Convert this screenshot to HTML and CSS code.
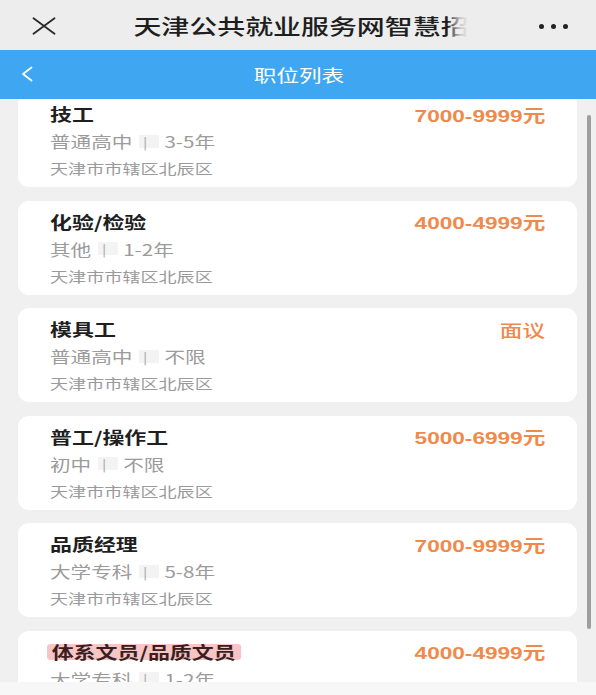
FILE: index.html
```html
<!DOCTYPE html>
<html lang="zh-CN">
<head>
<meta charset="utf-8">
<title>职位列表</title>
<link rel="stylesheet" href="styles.css">
</head>
<body>
<div class="app">
  <header class="topbar">
    <svg class="close-icon" width="24" height="18" viewBox="0 0 24 18" aria-hidden="true">
      <path d="M1.5 1.2 L22.5 16.8 M22.5 1.2 L1.5 16.8" stroke="#2a2a2a" stroke-width="1.8" fill="none" stroke-linecap="round"/>
    </svg>
    <div class="topbar-title"><span class="topbar-text">天津公共就业服务网智慧招</span></div>
    <div class="more"><span class="dot"></span><span class="dot"></span><span class="dot"></span></div>
  </header>
  <nav class="navbar">
    <svg class="back-icon" width="12" height="16" viewBox="0 0 12 16" aria-hidden="true">
      <path d="M10.5 1.5 L2 8 L10.5 14.5" stroke="#ffffff" stroke-width="1.8" fill="none" stroke-linejoin="round" stroke-linecap="round"/>
    </svg>
    <div class="navbar-title"><span class="navbar-text">职位列表</span></div>
  </nav>
  <main class="list">
    <div class="cards">
      <div class="card">
        <div class="row"><span class="job">技工</span><span class="pay">7000-9999元</span></div>
        <div class="meta"><span>普通高中</span><span class="sep">|</span><span>3-5年</span></div>
        <div class="addr">天津市市辖区北辰区</div>
      </div>
      <div class="card">
        <div class="row"><span class="job">化验/检验</span><span class="pay">4000-4999元</span></div>
        <div class="meta"><span>其他</span><span class="sep">|</span><span>1-2年</span></div>
        <div class="addr">天津市市辖区北辰区</div>
      </div>
      <div class="card">
        <div class="row"><span class="job">模具工</span><span class="pay pay-cn">面议</span></div>
        <div class="meta"><span>普通高中</span><span class="sep">|</span><span>不限</span></div>
        <div class="addr">天津市市辖区北辰区</div>
      </div>
      <div class="card">
        <div class="row"><span class="job">普工/操作工</span><span class="pay">5000-6999元</span></div>
        <div class="meta"><span>初中</span><span class="sep">|</span><span>不限</span></div>
        <div class="addr">天津市市辖区北辰区</div>
      </div>
      <div class="card">
        <div class="row"><span class="job">品质经理</span><span class="pay">7000-9999元</span></div>
        <div class="meta"><span>大学专科</span><span class="sep">|</span><span>5-8年</span></div>
        <div class="addr">天津市市辖区北辰区</div>
      </div>
      <div class="card">
        <div class="row"><span class="job job-marked">体系文员/品质文员</span><span class="pay">4000-4999元</span></div>
        <div class="meta"><span>大学专科</span><span class="sep">|</span><span>1-2年</span></div>
        <div class="addr">天津市市辖区北辰区</div>
      </div>
    </div>
    <div class="scrollbar"></div>
  </main>
  <footer class="bottom-strip"></footer>
</div>
</body>
</html>
```
FILE: styles.css
```css
* { box-sizing: border-box; }

html, body {
  margin: 0;
  padding: 0;
}

body {
  width: 596px;
  height: 695px;
  overflow: hidden;
  background: #f0f0f0;
  font-family: "Noto Sans CJK SC", "Noto Sans", sans-serif;
}

.app {
  display: flex;
  flex-direction: column;
  height: 695px;
}

/* top (wechat-like) bar */
.topbar {
  height: 50px;
  flex: none;
  background: #ededed;
  display: flex;
  align-items: center;
  padding: 0 28px 0 32px;
}

.close-icon {
  flex: none;
  margin-top: 1px;
}

.topbar-title {
  flex: 1;
  display: flex;
  justify-content: center;
  padding-left: 6px;
}

.topbar-text {
  position: relative;
  display: inline-block;
  font-size: 21px;
  font-weight: 500;
  color: #1e1e1e;
  line-height: 30px;
  transform: scaleX(1.33);
  transform-origin: center center;
}

.topbar-text::after {
  content: "";
  position: absolute;
  right: 0;
  top: 0;
  width: 16px;
  height: 100%;
  background: linear-gradient(to right, rgba(237,237,237,0) 0%, rgba(237,237,237,0.8) 60%, #ededed 100%);
}

.more {
  flex: none;
  display: flex;
  gap: 7px;
  align-items: center;
  margin-top: 2px;
}

.dot {
  width: 5px;
  height: 5px;
  border-radius: 50%;
  background: #222;
}

/* blue header */
.navbar {
  height: 49px;
  flex: none;
  background: #3fa6f1;
  display: flex;
  align-items: center;
  padding: 0 0 0 21px;
}

.back-icon {
  flex: none;
  margin-top: -2px;
}

.navbar-title {
  flex: 1;
  display: flex;
  justify-content: center;
  margin-right: 31px;
  margin-top: -1px;
}

.navbar-text {
  display: inline-block;
  color: #ffffff;
  font-size: 17px;
  transform: scaleX(1.33);
  transform-origin: center center;
}

/* list */
.list {
  position: relative;
  height: 583px;
  flex: none;
  overflow: hidden;
  background: #f0f0f0;
  padding: 0 19px 0 18px;
}

.cards {
  margin-top: -6px;
  display: flex;
  flex-direction: column;
  gap: 13.5px;
}

.card {
  height: 94px;
  background: #ffffff;
  border-radius: 11px;
  padding: 9px 32px 8px 32px;
}

.row {
  display: flex;
  justify-content: space-between;
  align-items: center;
  height: 24px;
}

.job {
  display: inline-block;
  font-size: 16.5px;
  font-weight: 700;
  color: #1f1f1f;
  line-height: 24px;
  transform: scaleX(1.33);
  transform-origin: left center;
}

.job-marked {
  line-height: 16px;
  padding: 0 4px 0 3.5px;
  margin-left: -3.5px;
  background: rgba(240, 150, 150, 0.55);
  border-radius: 3px;
  color: #3b1f1f;
}

.pay {
  display: inline-block;
  font-family: "Liberation Sans", "Noto Sans CJK SC", sans-serif;
  font-size: 17px;
  font-weight: 700;
  color: #ef8a4c;
  transform: scaleX(1.33);
  transform-origin: right center;
}

.pay-cn {
  font-family: "Noto Sans CJK SC", sans-serif;
  font-weight: 500;
}

.meta {
  margin-top: 3px;
  height: 24px;
  line-height: 24px;
  font-size: 15.5px;
  color: #9b9b9b;
  display: flex;
  align-items: center;
  transform: scaleX(1.33);
  transform-origin: left center;
}

.sep {
  display: inline-block;
  width: 15px;
  height: 13px;
  line-height: 13px;
  margin-left: 5px;
  margin-right: 4px;
  padding-left: 3px;
  background: #f3f3f3;
  font-size: 12px;
  color: #a8a8a8;
}

.addr {
  margin-top: 4px;
  height: 22px;
  line-height: 22px;
  font-size: 13.6px;
  color: #9a9a9a;
  transform: scaleX(1.33);
  transform-origin: left center;
}

.scrollbar {
  position: absolute;
  right: 5px;
  top: 16px;
  width: 4px;
  height: 514px;
  border-radius: 2px;
  background: #9e9e9e;
}

.bottom-strip {
  height: 13px;
  flex: none;
  background: #f7f7f7;
}
```
